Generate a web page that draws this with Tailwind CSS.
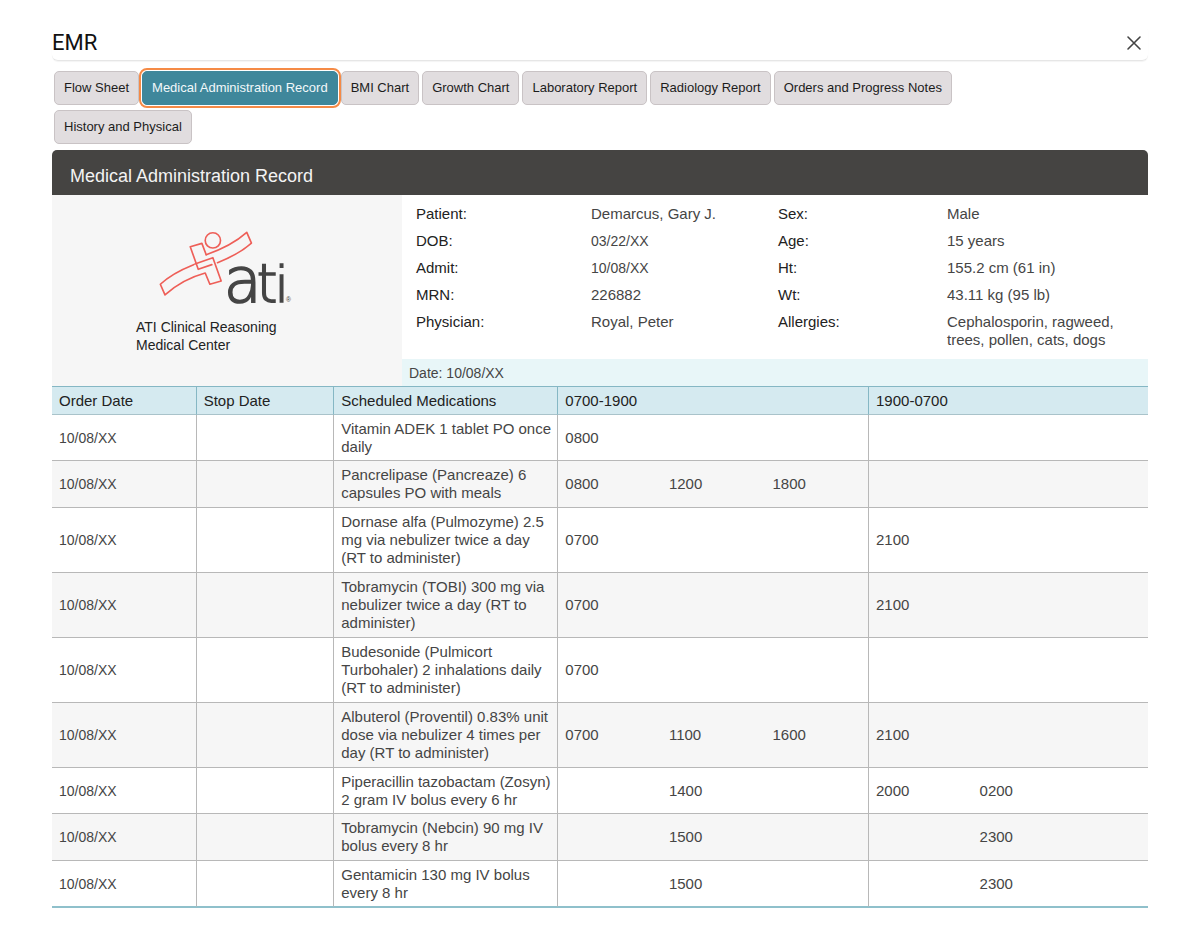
<!DOCTYPE html>
<html lang="en">
<head>
<meta charset="utf-8">
<meta name="viewport" content="width=device-width, initial-scale=1">
<title>EMR</title>
<script src="https://cdn.jsdelivr.net/npm/@tailwindcss/browser@4"></script>
</head>
<body class="bg-white font-['Liberation_Sans',Arial,sans-serif] text-[#454545]">
<div class="mx-auto px-[52px] pt-[25px] pb-5">
  <header class="flex h-9 items-center justify-between rounded-md border-b border-[#e6e6e6] pr-1.5 shadow-[0_1px_1px_#f4f4f4]">
    <h1 class="font-[Roboto,sans-serif] text-[22px] leading-9 text-[#111]">EMR</h1>
    <button type="button" aria-label="Close" class="flex size-4 items-center justify-center text-[#444]">
      <svg viewBox="0 0 16 16" class="size-4" fill="none" stroke="currentColor" stroke-width="1.6" stroke-linecap="round"><path d="M2 2 14 14M14 2 2 14"/></svg>
    </button>
  </header>

  <nav aria-label="Chart sections" class="flex flex-wrap gap-x-[3px] gap-y-[5px] pt-[10px] pr-16 pb-1.5 pl-[2px] text-[13px] leading-4 text-[#1c1c1c] [&>button]:h-[34px] [&>button]:rounded-[5px] [&>button]:border [&>button]:px-[9px]">
    <button type="button" class="border-[#c9c3c5] bg-[#e1dddf]">Flow Sheet</button>
    <button type="button" aria-current="page" class="z-10 border-[#3f879b] bg-[#3f879b] text-[#f2f8fa] outline-2 outline-offset-1 outline-[#f58a46]">Medical Administration Record</button>
    <button type="button" class="border-[#c9c3c5] bg-[#e1dddf]">BMI Chart</button>
    <button type="button" class="border-[#c9c3c5] bg-[#e1dddf]">Growth Chart</button>
    <button type="button" class="border-[#c9c3c5] bg-[#e1dddf]">Laboratory Report</button>
    <button type="button" class="border-[#c9c3c5] bg-[#e1dddf]">Radiology Report</button>
    <button type="button" class="border-[#c9c3c5] bg-[#e1dddf]">Orders and Progress Notes</button>
    <button type="button" class="border-[#c9c3c5] bg-[#e1dddf]">History and Physical</button>
  </nav>

  <main>
    <h2 class="rounded-t-[5px] bg-[#454442] px-[18px] pt-4 pb-[9px] text-[18px] leading-5 text-[#f3f3f3]">Medical Administration Record</h2>

    <section class="grid grid-cols-[350fr_746fr]">
      <div class="flex flex-col items-center bg-[#f6f6f6] pt-[13px] pr-6">
        <div class="w-fit">
          <svg role="img" aria-label="ATI logo" viewBox="80 -20 415 315" class="ml-5 h-[105px] w-[138px] overflow-visible">
            <g fill="none" stroke="#ee5f58" stroke-width="5" stroke-linejoin="round" stroke-linecap="round">
              <circle cx="251" cy="77" r="23"/>
              <path d="M231 120C275 105 318 84 353 53L367 85C338 111 303 129 265 144"/>
              <path d="M231 120 218 86 183 96 207 164 248 150"/>
              <path d="M193 150C158 164 120 183 93 209L107 241C141 210 184 187 228 175L242 209 276 199 251 129 197 148"/>
            </g>
            <text y="262" font-family="DejaVu Sans" font-weight="200" fill="#454545" stroke="#454545" stroke-width="5"><tspan x="284" font-size="186">a</tspan><tspan x="383" font-size="158">t</tspan><tspan x="437" font-size="152">i</tspan><tspan x="471" font-family="Liberation Sans" font-size="20" stroke="none">®</tspan></text>
          </svg>
          <p class="mt-[5px] text-[14px] leading-[18px] text-[#222]">ATI Clinical Reasoning<br>Medical Center</p>
        </div>
      </div>
      <div class="flex flex-col text-[15px] leading-[18px]">
        <dl class="grid grid-cols-[175fr_187fr_169fr_201fr] gap-y-[9px] pt-[10px] pb-[10px] pl-[14px] [&>dt]:text-[#222]">
          <dt>Patient:</dt><dd>Demarcus, Gary J.</dd><dt>Sex:</dt><dd>Male</dd>
          <dt>DOB:</dt><dd class="text-[14px]">03/22/XX</dd><dt>Age:</dt><dd>15 years</dd>
          <dt>Admit:</dt><dd class="text-[14px]">10/08/XX</dd><dt>Ht:</dt><dd>155.2 cm (61 in)</dd>
          <dt>MRN:</dt><dd>226882</dd><dt>Wt:</dt><dd>43.11 kg (95 lb)</dd>
          <dt>Physician:</dt><dd>Royal, Peter</dd><dt>Allergies:</dt><dd>Cephalosporin, ragweed, trees, pollen, cats, dogs</dd>
        </dl>
        <p class="bg-[#e8f6f8] px-[7px] pt-[5px] pb-1 text-[14px]">Date: 10/08/XX</p>
      </div>
    </section>

    <table class="w-full table-fixed border-separate border-spacing-0 border-b border-[#8fc0cb] text-left text-[15px] leading-[18px] [&_td]:border-b [&_td]:border-[#b8b8b8] [&_td]:py-1 [&_td]:pl-[7px] [&_th]:h-[29px] [&_th]:border-y [&_th]:border-t-[#85b7c4] [&_th]:border-r-[#85b7c4] [&_th]:border-b-[#a9c3ca] [&_th]:pl-[7px] [&_th]:font-normal [&_th]:text-[#222] [&_th:not(:last-child)]:border-r [&_td:nth-child(-n+3)]:border-r [&_td:nth-child(6)]:border-r [&_td:first-child]:text-[14px] [&_tbody_tr]:h-[46px] [&_tbody_tr:nth-child(even)]:h-[47px] [&_tbody_tr:nth-child(even)]:bg-[#f6f6f6] [&_tbody_tr.tall]:h-[65px]! [&_tbody_tr:last-child_td]:border-b-[#8fc0cb]">
      <colgroup>
        <col class="w-[13.2%]"><col class="w-[12.55%]"><col class="w-[20.45%]">
        <col class="w-[9.45%]"><col class="w-[9.45%]"><col class="w-[9.45%]">
        <col class="w-[9.45%]"><col class="w-[9.45%]"><col class="w-[6.55%]">
      </colgroup>
      <thead>
        <tr class="bg-[#d5eaf0]"><th scope="col">Order Date</th><th scope="col">Stop Date</th><th scope="col">Scheduled Medications</th><th scope="colgroup" colspan="3">0700-1900</th><th scope="colgroup" colspan="3">1900-0700</th></tr>
      </thead>
      <tbody>
        <tr><td>10/08/XX</td><td></td><td>Vitamin ADEK 1 tablet PO once daily</td><td>0800</td><td></td><td></td><td></td><td></td><td></td></tr>
        <tr><td>10/08/XX</td><td></td><td>Pancrelipase (Pancreaze) 6 capsules PO with meals</td><td>0800</td><td>1200</td><td>1800</td><td></td><td></td><td></td></tr>
        <tr class="tall"><td>10/08/XX</td><td></td><td>Dornase alfa (Pulmozyme) 2.5 mg via nebulizer twice a day (RT to administer)</td><td>0700</td><td></td><td></td><td>2100</td><td></td><td></td></tr>
        <tr class="tall"><td>10/08/XX</td><td></td><td>Tobramycin (TOBI) 300 mg via nebulizer twice a day (RT to administer)</td><td>0700</td><td></td><td></td><td>2100</td><td></td><td></td></tr>
        <tr class="tall"><td>10/08/XX</td><td></td><td>Budesonide (Pulmicort Turbohaler) 2 inhalations daily (RT to administer)</td><td>0700</td><td></td><td></td><td></td><td></td><td></td></tr>
        <tr class="tall"><td>10/08/XX</td><td></td><td>Albuterol (Proventil) 0.83% unit dose via nebulizer 4 times per day (RT to administer)</td><td>0700</td><td>1100</td><td>1600</td><td>2100</td><td></td><td></td></tr>
        <tr><td>10/08/XX</td><td></td><td>Piperacillin tazobactam (Zosyn) 2 gram IV bolus every 6 hr</td><td></td><td>1400</td><td></td><td>2000</td><td>0200</td><td></td></tr>
        <tr><td>10/08/XX</td><td></td><td>Tobramycin (Nebcin) 90 mg IV bolus every 8 hr</td><td></td><td>1500</td><td></td><td></td><td>2300</td><td></td></tr>
        <tr><td>10/08/XX</td><td></td><td>Gentamicin 130 mg IV bolus every 8 hr</td><td></td><td>1500</td><td></td><td></td><td>2300</td><td></td></tr>
      </tbody>
    </table>
  </main>
</div>
</body>
</html>
